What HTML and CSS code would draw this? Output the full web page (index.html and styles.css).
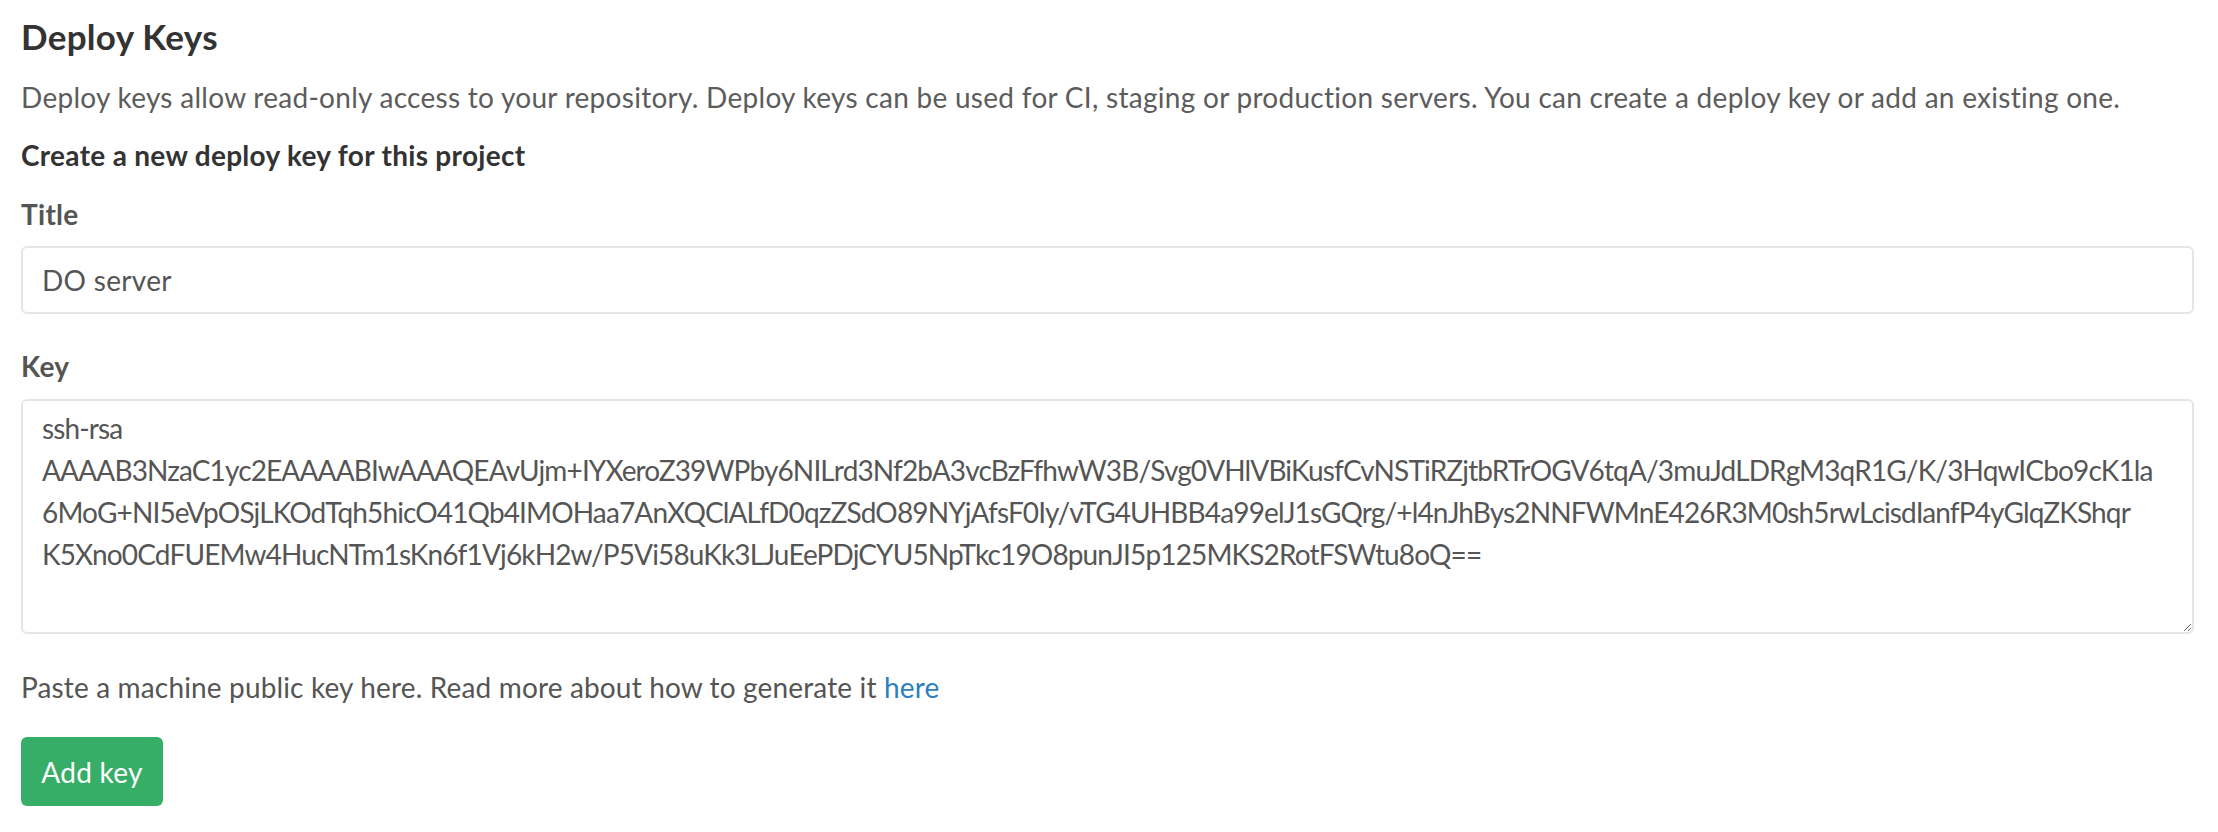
FILE: index.html
```html
<!DOCTYPE html>
<html lang="en">
<head>
<meta charset="utf-8">
<title>Deploy Keys</title>
<link rel="stylesheet" href="styles.css">
</head>
<body>
<div class="page">
  <h4 class="page-title">Deploy Keys</h4>
  <p class="lead">Deploy keys allow read-only access to your repository. Deploy keys can be used for CI, staging or production servers. You can create a deploy key or add an existing one.</p>
  <h5 class="sub-title">Create a new deploy key for this project</h5>
  <form class="form">
    <div class="form-group">
      <label class="label" for="title">Title</label>
      <input class="input" id="title" type="text" value="DO server">
    </div>
    <div class="form-group">
      <label class="label" for="key">Key</label>
      <textarea class="textarea" id="key">ssh-rsa AAAAB3NzaC1yc2EAAAABIwAAAQEAvUjm+IYXeroZ39WPby6NILrd3Nf2bA3vcBzFfhwW3B/Svg0VHlVBiKusfCvNSTiRZjtbRTrOGV6tqA/3muJdLDRgM3qR1G/K/3HqwICbo9cK1la6MoG+NI5eVpOSjLKOdTqh5hicO41Qb4IMOHaa7AnXQClALfD0qzZSdO89NYjAfsF0Iy/vTG4UHBB4a99elJ1sGQrg/+l4nJhBys2NNFWMnE426R3M0sh5rwLcisdIanfP4yGlqZKShqr
K5Xno0CdFUEMw4HucNTm1sKn6f1Vj6kH2w/P5Vi58uKk3LJuEePDjCYU5NpTkc19O8punJI5p125MKS2RotFSWtu8oQ==</textarea>
    </div>
    <p class="help">Paste a machine public key here. Read more about how to generate it <a class="link" href="#">here</a></p>
    <button class="btn-create" type="button">Add key</button>
  </form>
</div>
</body>
</html>
```

FILE: styles.css
```css
html, body {
  margin: 0;
  padding: 0;
  background: #ffffff;
}

.page {
  padding: 16px 24px 0 21px;
  font-family: Lato, "Open Sans", sans-serif;
  font-size: 28px;
  color: #555555;
  letter-spacing: 0.3px;
}

.page-title {
  margin: 0;
  font-size: 35px;
  line-height: 40px;
  font-weight: 700;
  color: #333333;
  letter-spacing: 0.3px;
}

.lead {
  margin: 21px 0 0;
  line-height: 40px;
  color: #5c5c5c;
  letter-spacing: 0.28px;
}

.sub-title {
  margin: 18px 0 0;
  font-size: 28px;
  line-height: 40px;
  font-weight: 700;
  color: #333333;
}

.form {
  margin: 0;
}

.form-group {
  display: flex;
  flex-direction: column;
}

.label {
  margin-top: 19px;
  line-height: 40px;
  font-weight: 700;
  color: #555555;
}

.form-group + .form-group .label {
  margin-top: 32px;
}

.input {
  margin-top: 12px;
  box-sizing: border-box;
  height: 68px;
  width: 100%;
  padding: 0 19px;
  border: 2px solid #e5e5e5;
  border-radius: 6px;
  font-family: inherit;
  font-size: 28px;
  letter-spacing: 0.3px;
  color: #555555;
  outline: none;
}

.textarea {
  margin-top: 13px;
  box-sizing: border-box;
  height: 235px;
  width: 100%;
  padding: 6px 32px 6px 19px;
  border: 2px solid #e5e5e5;
  border-radius: 6px;
  font-family: inherit;
  font-size: 28px;
  line-height: 42px;
  letter-spacing: -0.86px;
  color: #555555;
  outline: none;
  resize: vertical;
  overflow-wrap: break-word;
}

.help {
  margin: 33px 0 0;
  line-height: 40px;
  color: #555555;
  letter-spacing: 0.15px;
}

.link {
  color: #2b7fc0;
  text-decoration: none;
}

.btn-create {
  margin-top: 30px;
  height: 69px;
  width: 142px;
  padding: 0;
  border: none;
  border-radius: 6px;
  background: #37ae67;
  color: #ffffff;
  font-family: inherit;
  font-size: 28px;
  letter-spacing: 0.3px;
  cursor: pointer;
}
```
